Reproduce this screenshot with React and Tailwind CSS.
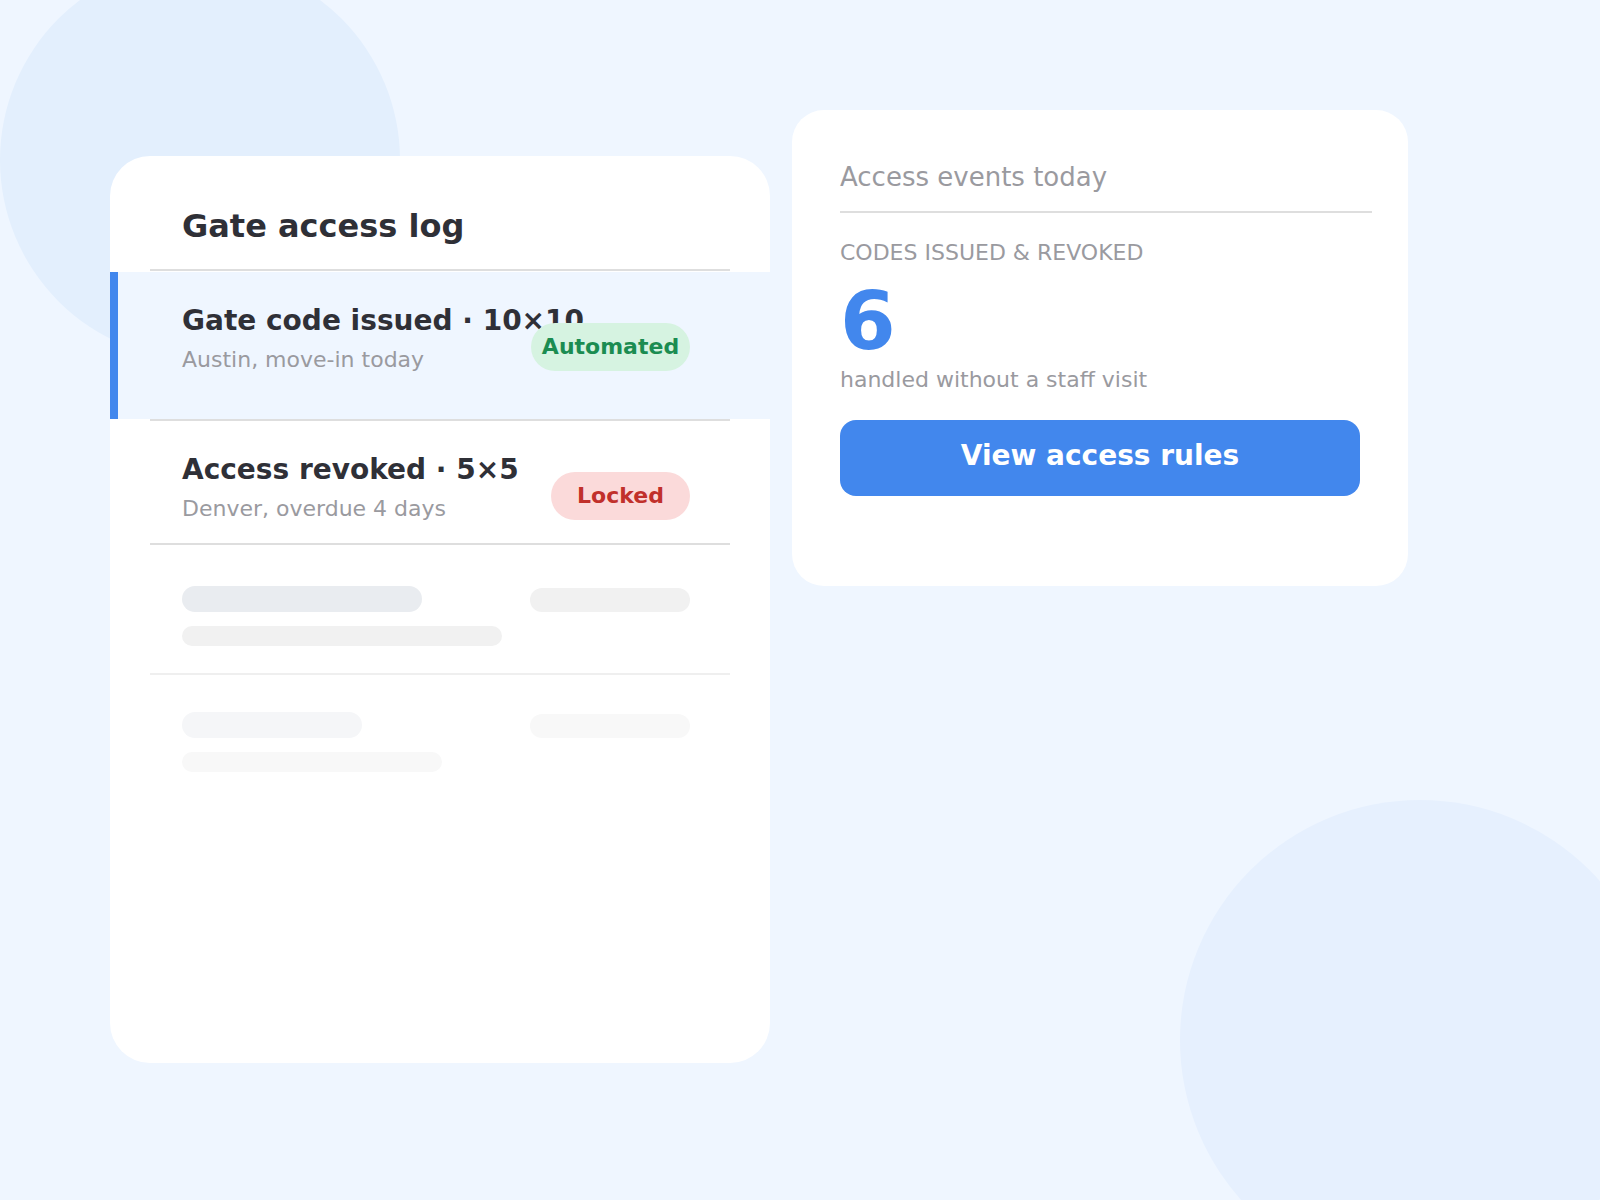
import React from "react";

const rows = [
  {
    title: "Gate code issued · 10×10",
    place: "Austin, move-in today",
    badge: "Automated",
    badgeClass: "w-[159px] bg-[#d6f3e1] text-[#1b8c51]",
    active: true,
  },
  {
    title: "Access revoked · 5×5",
    place: "Denver, overdue 4 days",
    badge: "Locked",
    badgeClass: "w-[139px] bg-[#fbdada] text-[#c1302b]",
    active: false,
  },
];

function LogRow({ row }) {
  return (
    <div className={`flex ${row.active ? "h-[147px] bg-[#eff6ff]" : "h-[122px]"}`}>
      <div className={`w-2 shrink-0 ${row.active ? "bg-[#4287ed]" : ""}`} />
      <div className="flex min-w-0 flex-1 items-start pl-16 pr-20 pt-[33px]">
        <div className="min-w-0 flex-1">
          <div className="whitespace-nowrap text-[28px] font-bold leading-[32px] text-[#2f3037]">
            {row.title}
          </div>
          <div className="mt-[9px] text-[22px] leading-[28px] text-[#9a9a9f]">{row.place}</div>
        </div>
        <span
          className={`mt-[18px] flex h-12 shrink-0 items-center justify-center rounded-full text-[22px] font-bold leading-none ${row.badgeClass}`}
        >
          {row.badge}
        </span>
      </div>
    </div>
  );
}

function SkeletonRow({ top, first, second, colors }) {
  return (
    <div className={`flex h-[128px] items-start justify-between pl-[72px] pr-20 ${top}`}>
      <div>
        <div className={`h-[26px] rounded-full ${first} ${colors[0]}`} />
        <div className={`mt-[14px] h-5 rounded-full ${second} ${colors[1]}`} />
      </div>
      <div className={`mt-[2px] h-6 w-[160px] rounded-full ${colors[2]}`} />
    </div>
  );
}

export default function App() {
  return (
    <div className="relative h-[1200px] w-full overflow-hidden bg-[#eff6ff] font-['DejaVu_Sans',sans-serif]">
      {/* background blobs */}
      <div className="absolute left-0 top-[-40px] h-[400px] w-[400px] rounded-full bg-[#e3effd]" />
      <div className="absolute left-[1180px] top-[800px] h-[480px] w-[480px] rounded-full bg-[#e6f0fe]" />

      <div className="relative flex items-start gap-[22px] pl-[110px] pt-[110px]">
        {/* log card */}
        <section className="mt-[46px] h-[907px] w-[660px] overflow-hidden rounded-[40px] bg-white">
          <h1 className="pl-[72px] pt-[52px] text-[32px] font-bold leading-[36px] text-[#2f3037]">
            Gate access log
          </h1>
          <div className="mx-10 mt-[25px] h-[2px] bg-[#dedede]" />
          <div className="mt-px">
            <LogRow row={rows[0]} />
          </div>
          <div className="mx-10 h-[2px] bg-[#dedede]" />
          <LogRow row={rows[1]} />
          <div className="mx-10 h-[2px] bg-[#dedede]" />
          <SkeletonRow
            top="pt-[41px]"
            first="w-[240px]"
            second="w-[320px]"
            colors={["bg-[#e9ecf0]", "bg-[#f1f1f1]", "bg-[#f1f1f1]"]}
          />
          <div className="mx-10 h-[2px] bg-[#efefef]" />
          <SkeletonRow
            top="pt-[37px]"
            first="w-[180px]"
            second="w-[260px]"
            colors={["bg-[#f5f6f8]", "bg-[#f8f8f8]", "bg-[#f8f8f8]"]}
          />
        </section>

        {/* summary card */}
        <section className="h-[476px] w-[616px] rounded-[32px] bg-white pl-12 pr-9 pt-[51px]">
          <h2 className="text-[26px] leading-[32px] text-[#9a9a9f]">Access events today</h2>
          <div className="mt-[18px] h-[2px] bg-[#dedede]" />
          <div className="mt-[26px] text-[22px] uppercase leading-[28px] text-[#9a9a9f]">
            Codes issued &amp; revoked
          </div>
          <div className="mt-[15px] text-[80px] font-bold leading-none text-[#4287ed]">6</div>
          <div className="mt-[4px] text-[22px] leading-[28px] text-[#9a9a9f]">
            handled without a staff visit
          </div>
          <button className="mt-[26px] flex h-[76px] w-[520px] items-center justify-center rounded-2xl bg-[#4287ed] pb-1 text-[28px] font-bold text-white">
            View access rules
          </button>
        </section>
      </div>
    </div>
  );
}
